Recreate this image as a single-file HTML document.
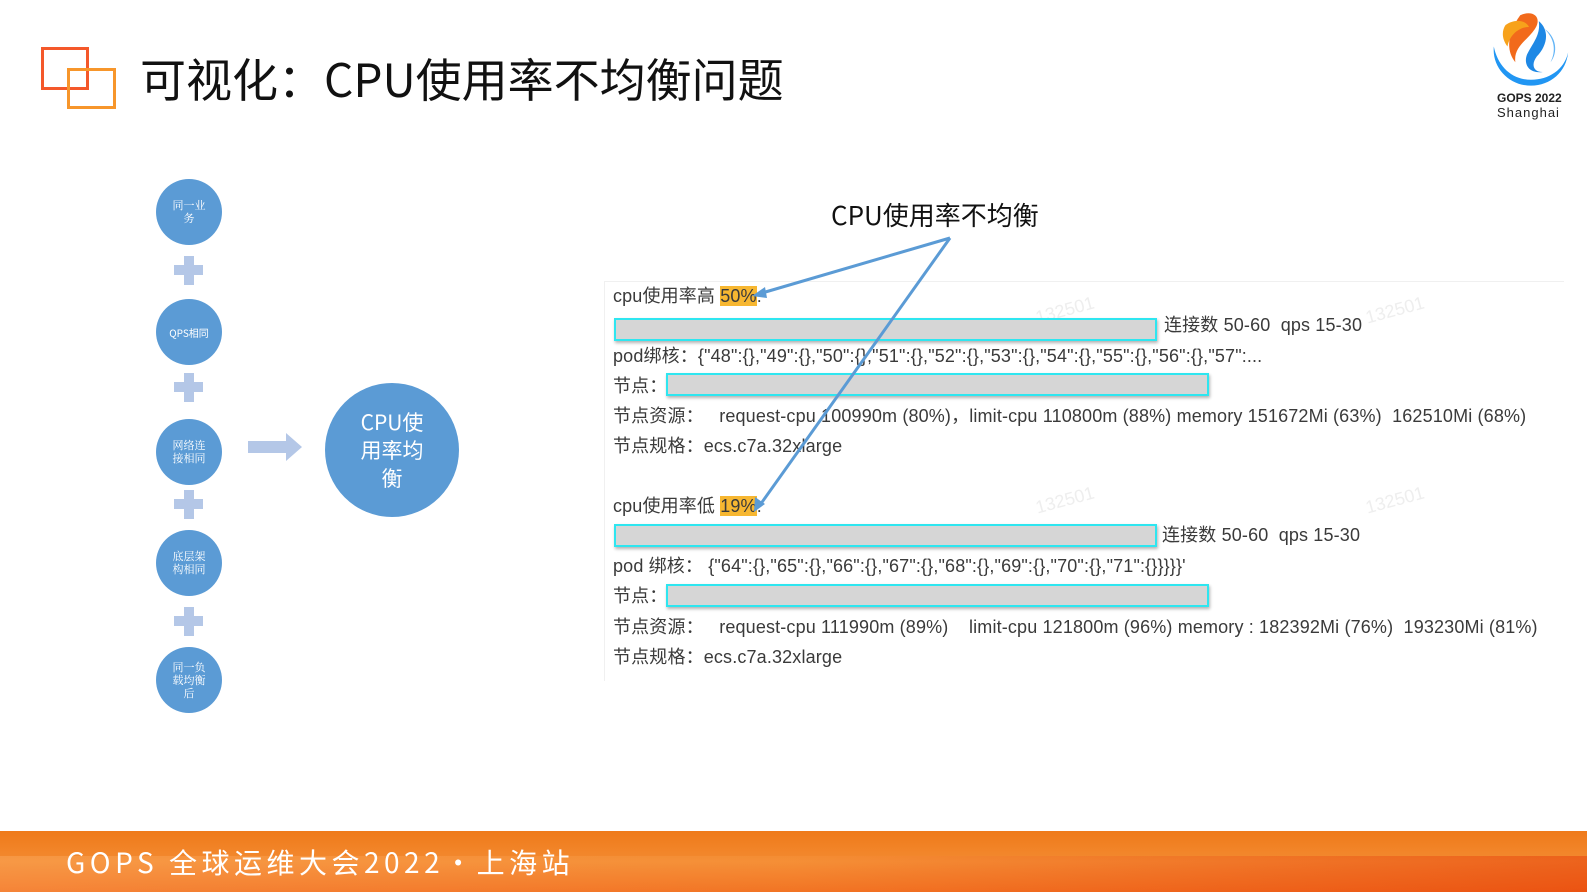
<!DOCTYPE html>
<html><head><meta charset="utf-8"><style>
*{margin:0;padding:0;box-sizing:border-box}
body{width:1587px;height:892px;position:relative;background:#fff;font-family:"Liberation Sans","Noto Sans CJK SC",sans-serif;overflow:hidden}
.a{position:absolute;white-space:nowrap}
.c{position:absolute;border-radius:50%;background:#5b9bd5;color:#fff;display:flex;align-items:center;justify-content:center;text-align:center;font-family:"Noto Serif CJK SC","Noto Sans CJK SC",serif}
.sm{width:66px;height:66px;font-size:11px;line-height:13px}
.p{position:absolute;background:#b4c7e7}
.t{position:absolute;font-size:18px;color:#3a3a3a;white-space:nowrap;line-height:22px;letter-spacing:0.15px}
.box{position:absolute;background:#d6d6d6;border:2px solid #2ee6f0;box-shadow:1px 2px 3px rgba(0,0,0,.3)}
.hl{background:#f7b731}
.w{position:absolute;color:#eee;font-size:18px;transform:rotate(-15deg)}
</style></head><body>
<div class="a" style="left:41px;top:47px;width:48px;height:43px;border:3px solid #f4582a"></div>
<div class="a" style="left:67px;top:68px;width:49px;height:41px;border:3px solid #f7962b"></div>
<div class="a" style="left:140px;top:48px;font-size:46px;color:#111;font-family:'Noto Sans CJK SC',sans-serif;line-height:60px">可视化：CPU使用率不均衡问题</div>

<svg class="a" style="left:1486px;top:6px" width="88" height="86" viewBox="0 0 90 85">
<path d="M35 8 C48 2 58 10 50 22 C42 34 28 40 30 56 C20 44 22 26 35 8Z" fill="#f26a1b"/>
<path d="M20 18 C28 12 40 12 44 20 C34 20 24 28 22 40 C16 32 16 24 20 18Z" fill="#f7a21b"/>
<path d="M54 14 C66 24 62 40 52 50 C46 58 48 66 58 66 C44 68 38 58 42 48 C48 36 56 28 54 14Z" fill="#1e88e5"/>
<path d="M8 40 C6 62 24 80 46 80 C66 80 82 66 84 46 C80 64 64 74 46 74 C26 74 12 60 8 40Z" fill="#2196f3"/>
<path d="M60 22 C72 30 74 46 66 56 C72 44 70 32 60 22Z" fill="#64b5f6"/>
</svg>
<div class="a" style="left:1497px;top:91px;font-size:12px;font-weight:bold;color:#222">GOPS 2022</div>
<div class="a" style="left:1497px;top:105px;font-size:13px;color:#222;letter-spacing:1px">Shanghai</div>

<div class="c sm" style="left:156px;top:179px">同一业<br>务</div>
<div class="p" style="left:174px;top:265px;width:29px;height:10px"></div><div class="p" style="left:184px;top:256px;width:10px;height:29px"></div>
<div class="c sm" style="left:156px;top:299px;font-family:'Noto Sans CJK SC',sans-serif;font-size:10px">QPS相同</div>
<div class="p" style="left:174px;top:382px;width:29px;height:10px"></div><div class="p" style="left:184px;top:373px;width:10px;height:29px"></div>
<div class="c sm" style="left:156px;top:419px">网络连<br>接相同</div>
<div class="p" style="left:174px;top:499px;width:29px;height:10px"></div><div class="p" style="left:184px;top:490px;width:10px;height:29px"></div>
<div class="c sm" style="left:156px;top:530px">底层架<br>构相同</div>
<div class="p" style="left:174px;top:616px;width:29px;height:10px"></div><div class="p" style="left:184px;top:607px;width:10px;height:29px"></div>
<div class="c sm" style="left:156px;top:647px">同一负<br>载均衡<br>后</div>
<svg class="a" style="left:248px;top:433px" width="55" height="28"><path d="M0 8 H38 V0 L54 14 L38 28 V20 H0Z" fill="#b4c7e7"/></svg>
<div class="c" style="left:325px;top:383px;width:134px;height:134px;font-size:21px;line-height:28px;font-family:'Noto Sans CJK SC',sans-serif">CPU使<br>用率均<br>衡</div>

<div class="a" style="left:831px;top:198px;font-size:26px;color:#111;font-family:'Noto Sans CJK SC',sans-serif;line-height:34px">CPU使用率不均衡</div>

<div class="a" style="left:604px;top:281px;width:960px;height:400px;border-top:1px solid #f0f0f0;border-left:1px solid #f0f0f0"></div>
<div class="w" style="left:1035px;top:300px">132501</div>
<div class="w" style="left:1365px;top:300px">132501</div>
<div class="w" style="left:1035px;top:490px">132501</div>
<div class="w" style="left:1365px;top:490px">132501</div>
<div class="t" style="left:613px;top:285px">cpu使用率高 <span class="hl">50%</span>:</div>
<div class="box" style="left:614px;top:318px;width:543px;height:23px"></div>
<div class="t" style="left:1164px;top:314px">连接数 50-60 &nbsp;qps 15-30</div>
<div class="t" style="left:613px;top:345px">pod绑核：{"48":{},"49":{},"50":{},"51":{},"52":{},"53":{},"54":{},"55":{},"56":{},"57":...</div>
<div class="t" style="left:613px;top:375px">节点：</div>
<div class="box" style="left:666px;top:373px;width:543px;height:23px"></div>
<div class="t" style="left:613px;top:405px">节点资源： &nbsp;&nbsp;request-cpu 100990m (80%)，limit-cpu 110800m (88%) memory 151672Mi (63%) &nbsp;162510Mi (68%)</div>
<div class="t" style="left:613px;top:435px">节点规格：ecs.c7a.32xlarge</div>

<div class="t" style="left:613px;top:495px">cpu使用率低 <span class="hl">19%</span>:</div>
<div class="box" style="left:614px;top:524px;width:543px;height:23px"></div>
<div class="t" style="left:1162px;top:524px">连接数 50-60 &nbsp;qps 15-30</div>
<div class="t" style="left:613px;top:555px">pod 绑核： {"64":{},"65":{},"66":{},"67":{},"68":{},"69":{},"70":{},"71":{}}}}}'</div>
<div class="t" style="left:613px;top:585px">节点：</div>
<div class="box" style="left:666px;top:584px;width:543px;height:23px"></div>
<div class="t" style="left:613px;top:616px">节点资源： &nbsp;&nbsp;request-cpu 111990m (89%) &nbsp;&nbsp;&nbsp;limit-cpu 121800m (96%) memory : 182392Mi (76%) &nbsp;193230Mi (81%)</div>
<div class="t" style="left:613px;top:646px">节点规格：ecs.c7a.32xlarge</div>

<svg class="a" style="left:0;top:0" width="1587" height="892">
<g stroke="#5b9bd5" stroke-width="3">
<line x1="950" y1="238" x2="762" y2="293"/>
<line x1="950" y1="238" x2="760" y2="505"/>
</g>
<path d="M752 296 L765 287 L767 298Z" fill="#5b9bd5"/>
<path d="M754 512 L755 497 L765 504Z" fill="#5b9bd5"/>
</svg>

<div class="a" style="left:0;top:831px;width:1587px;height:61px;background:linear-gradient(180deg,#ef7a1a 0%,#f38a30 50%,#f06a1a 100%)"></div>
<div class="a" style="left:0;top:856px;width:1587px;height:36px;background:linear-gradient(90deg,rgba(255,180,110,.35),rgba(255,170,90,.15) 50%,rgba(230,60,10,.5));"></div>
<div class="a" style="left:66px;top:843px;font-size:28px;color:#fff;letter-spacing:4.5px;line-height:38px;font-family:'Noto Sans CJK SC',sans-serif">GOPS 全球运维大会2022·上海站</div>
</body></html>
